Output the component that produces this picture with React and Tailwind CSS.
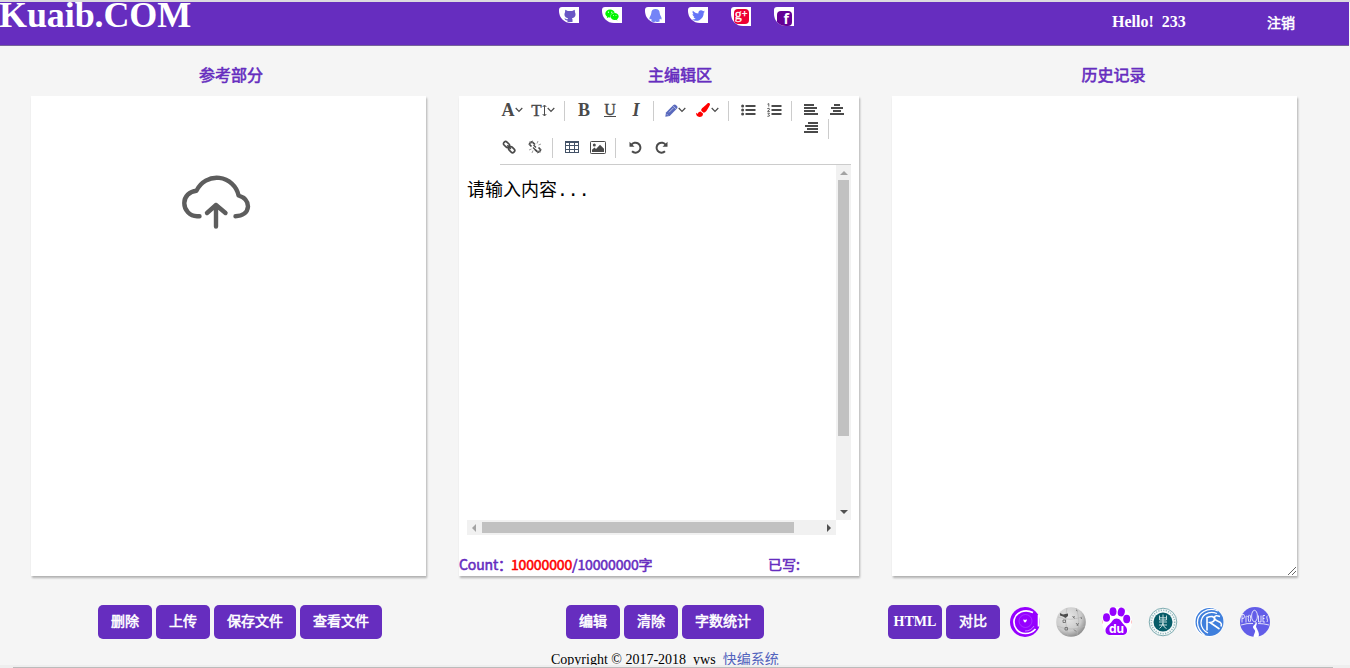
import React from "react";
import { FaWeixin, FaTwitter, FaPaintBrush } from "react-icons/fa";

const ink = "#4a4a4a";

function Btn({ children, wide, latin }) {
  return (
    <button className={`flex h-[34px] justify-center rounded-[5px] bg-[#662dbf] text-[14px] text-white ${latin ? "font-bold leading-[34px] font-['Liberation_Serif',serif]" : "leading-[30px] font-['Noto_Sans_CJK_SC',sans-serif] [-webkit-text-stroke:0.55px]"} ${wide ? "w-[82px]" : "w-[54px]"}`}>
      {children}
    </button>
  );
}

function Social({ children, tall }) {
  return (
    <span className={`flex w-5 items-center justify-center overflow-hidden rounded-tl-[3px] rounded-bl-[12px] bg-white ${tall ? "h-[19px]" : "h-4"}`}>
      {children}
    </span>
  );
}

function Title({ children, className }) {
  return <h2 className={`text-[16px] leading-6 text-[#662dbf] font-['Noto_Sans_CJK_SC',sans-serif] [-webkit-text-stroke:0.6px] ${className}`}>{children}</h2>;
}

function Chevron() {
  return (
    <svg width="8" height="6" viewBox="0 0 8 6" fill="none" stroke={ink} strokeWidth="1.2" className="shrink-0">
      <path d="M.7 1 4 4.4 7.3 1" />
    </svg>
  );
}

function Sep({ className }) {
  return <span className={`h-5 w-px shrink-0 bg-[#ccc] ${className}`} />;
}

function Lines({ rows }) {
  return (
    <svg width="14" height="11" viewBox="0 0 14 11" fill={ink} shapeRendering="crispEdges">
      {rows.map(([x, w], i) => (
        <rect key={i} x={x} y={i * 3} width={w} height="2" />
      ))}
    </svg>
  );
}

function BulletList() {
  return (
    <svg width="15" height="12" viewBox="0 0 15 12" fill={ink}>
      {[1, 5, 9].map((y) => (
        <g key={y}>
          <circle cx="1.6" cy={y + 1} r="1.5" />
          <path d={`M4.5 ${y}h10v2h-10z`} />
        </g>
      ))}
    </svg>
  );
}

function NumberList() {
  return (
    <svg width="15" height="14" viewBox="0 0 15 14" fill="none" stroke={ink}>
      <path d="M4.5 3h10M4.5 7h10M4.5 11h10" strokeWidth="2" />
      <path d="M.5 1.2 1.8.6v3M.3 5.6Q2.8 4.6 2.5 6.3L.6 8.4h2.2M.5 10.2h2L1.4 11.4Q3 12 2.3 13.1L.4 13.3" strokeWidth=".9" />
    </svg>
  );
}

function Pencil() {
  return (
    <svg width="13" height="13" viewBox="0 0 13 13">
      <path d="M.3 12.7 1 8.500 8.400 1Q9.700-.1 10.900 1L12.100 2.200Q13 3.400 12 4.600L4.700 12z" fill="#5969bd" />
      <path d="m4 8.300 4.500-4.500M8.300 2.200l2.700 2.700M1.800 10.200l1.200 1.200" stroke="#fff" strokeWidth=".55" />
    </svg>
  );
}

function Chain({ broken }) {
  return (
    <svg width="14" height="14" viewBox="0 0 14 14" fill="none" stroke={ink} strokeWidth="1.7">
      {broken ? (
        <>
          <path d="M7.500 3.500 9 2q1-.9 2 0l.7.7q.9 1 0 2L9.500 7M6.500 10.500 5 12q-1 .9-2 0l-.7-.7q-.9-1 0-2L4.500 7" transform="rotate(90 7 7)" />
          <path d="M5 7.500 9 11.500M5.500 5 8 7.500" strokeWidth="1.300" />
          <path d="M.5 4.500h2.500M4.500.5V3M1.500 1.500l2 2M11 9.500h2.500M9.500 11v2.500M10.500 10.500l2 2M10 1l-1 2.500M13 4l-2.500 1M1 10l2.500-1M4 13l1-2.500" stroke="#777" strokeWidth=".7" />
        </>
      ) : (
        <>
          <rect x="1.200" y="2.400" width="6.600" height="4.200" rx="1.900" transform="rotate(45 4.500 4.500)" />
          <rect x="6.400" y="7.600" width="6.600" height="4.200" rx="1.900" transform="rotate(45 9.700 9.700)" />
          <path d="m5.300 5.300 3.600 3.600" strokeWidth="1.600" />
        </>
      )}
    </svg>
  );
}

function Grid() {
  return (
    <svg width="14" height="12" viewBox="0 0 14 12" fill="none" stroke="#435267" shapeRendering="crispEdges">
      <path d="M.5.5h13v11H.5zM.5 1.5h13M.5 4.5h13M.5 8.5h13M4.500 1v10M9.500 1v10" />
    </svg>
  );
}

function Picture() {
  return (
    <svg width="16" height="13" viewBox="0 0 16 13">
      <rect x=".5" y=".5" width="15" height="12" rx=".8" fill="none" stroke={ink} />
      <circle cx="4.300" cy="3.900" r="1.500" fill={ink} />
      <path d="M2 11V8.800l2.500-2.400L6 7.900l4-4.100 4 4V11z" fill={ink} />
    </svg>
  );
}

function Turn({ flip }) {
  return (
    <svg width="13" height="13" viewBox="0 0 13 13" fill="none" className={flip ? "-scale-x-100" : ""}>
      <path d="M2.200 4A5 5 0 1 1 3 10.300" stroke={ink} strokeWidth="2" />
      <path d="M.5.8v5h5z" fill={ink} />
    </svg>
  );
}

function Cloud() {
  return (
    <svg width="70" height="54" viewBox="0 0 70 54" fill="none" stroke="#5d5d5d" strokeWidth="4.4" strokeLinecap="round" strokeLinejoin="round">
      <path d="M18.500 41.200H16A13 13 0 0 1 3.300 28C3.300 21.500 8.500 16.300 15.500 15.700A22.300 22.300 0 0 1 57.600 20.500C63 22.200 67 26 67 31.500C66.500 37.500 61.500 41.200 54.500 41.200" />
      <path d="M35 51.500V30M26 38l9-8 9.500 8" />
    </svg>
  );
}

function Arrow({ dir, faint }) {
  const d = { up: "M0 4h8L4 0z", down: "M0 0h8L4 4z", left: "M4 0v8L0 4z", right: "M0 0v8l4-4z" }[dir];
  return (
    <svg width={dir === "up" || dir === "down" ? 8 : 4} height={dir === "up" || dir === "down" ? 4 : 8} fill={faint ? "#a3a3a3" : "#505050"}>
      <path d={d} />
    </svg>
  );
}

function SpiralLogo() {
  return (
    <svg width="30" height="30" viewBox="0 0 30 30" fill="none">
      <circle cx="15" cy="15" r="15" fill="#9600ff" />
      <path d="M23 5.500C15 1.500 6 5 4.200 12.500 2.800 20 8 26.500 15.500 26.500q6 0 10-4.500" stroke="#fff" strokeWidth="1.700" />
      <path d="M28.700 8v11.500" stroke="#fff" strokeWidth="2" />
      <circle cx="15.500" cy="14" r="6.500" stroke="#b461ff" strokeWidth=".5" />
      <path d="M24 19q-3 5-9 5" stroke="#d9b0ff" strokeWidth=".7" />
      <path d="m13.500 12.300 1.500.7 1.700-.7v1.700L15 15.800 13.500 14z" fill="#fff" />
    </svg>
  );
}

function GlobeLogo() {
  return (
    <svg width="30" height="30" viewBox="0 0 30 30">
      <defs>
        <radialGradient id="globe" cx=".4" cy=".35" r=".7">
          <stop offset="0" stopColor="#e8e8e8" />
          <stop offset=".65" stopColor="#cacaca" />
          <stop offset="1" stopColor="#858585" />
        </radialGradient>
      </defs>
      <circle cx="15" cy="15" r="14.800" fill="url(#globe)" />
      <path d="M11 1Q8 13 12 29M20 1Q25 13 21 28M2 10q13 5 26-1M1 19q14 6 28 0" fill="none" stroke="#b4b4b4" strokeWidth=".6" />
      <path d="m4 6 3 1.500 5-1v2.500L9.500 11 7 9.500 4 8.500z" fill="#4d4d4d" />
      <path d="M7 13h2.500v2.500H7zM16.500 9l2 2.500M18.500 9l-1 2M20 16l2 2.500M22.500 16l-1.500 3M9 20.500h2.500V23H9zM18 22.500l2 2M20 3l1.500 1M25 10l.5 2" fill="none" stroke="#666" strokeWidth=".8" />
    </svg>
  );
}

function PawLogo() {
  return (
    <svg width="30" height="30" viewBox="0 0 30 30">
      <circle cx="15" cy="15" r="15" fill="#fff" />
      <g fill="#9600ff">
        <ellipse cx="4.500" cy="10.500" rx="3.500" ry="4.300" />
        <ellipse cx="11" cy="4.600" rx="3.500" ry="4.400" />
        <ellipse cx="19.300" cy="5" rx="3.500" ry="4.400" transform="rotate(12 19.300 5)" />
        <ellipse cx="24.700" cy="12" rx="3.500" ry="4.200" />
        <path d="M14.500 11.500c3.500 0 4.500 3 7 5.700 3 3 3.800 4.300 3.500 7-.5 3.500-3.500 4.300-10.500 3.700C7.500 28.500 4 28 3.500 24c-.3-3 1.500-4.500 4-6.800 2.500-2.200 3.500-5.700 7-5.700z" />
      </g>
      <path d="M.3 13.500v3M29.700 13.500v3" stroke="#ff8585" strokeWidth=".6" />
      <text x="14.500" y="25.500" textAnchor="middle" fill="#fff" fontSize="12" fontWeight="bold" fontFamily="Inter, sans-serif">du</text>
    </svg>
  );
}

function SealLogo() {
  return (
    <svg width="30" height="30" viewBox="0 0 30 30" fill="none">
      <circle cx="15" cy="15" r="13.800" fill="#f5f9f9" stroke="#80adb2" />
      <circle cx="15" cy="15" r="11.700" stroke="#94b8bd" strokeWidth="1.500" strokeDasharray="1.200 1.300" />
      <circle cx="15" cy="15" r="9.500" fill="#075c68" />
      <path d="M11.500 8.500v4.500h7V8.500M15 7.500v10M11.500 10.800h7M11 15h8M11 18h8M15 16q-1 4-3.500 5.500M15 17q1 4 3.500 4.500" stroke="#d5e8e8" strokeWidth=".9" />
    </svg>
  );
}

function WaveLogo() {
  return (
    <svg width="30" height="30" viewBox="0 0 30 30" fill="none">
      <circle cx="15" cy="15" r="15" fill="#fff" />
      <circle cx="15.500" cy="15" r="14" fill="#3f7fdc" />
      <path d="M24 4C14-.5 3 6 3.500 16c.3 5 3 9 7 12M23 6.500C14 3 7 8.500 7 16c.3 5 3 8 7 10" stroke="#fff" strokeWidth="1.300" />
      <path d="M13 23.500V10.500q7-2.500 7.500 1.500 0 3-4.500 3.500l9.500 6.500M26 9.500q-5-2-5.500 1 0 2.500 4 4t2.500 5" stroke="#fff" strokeWidth="1.600" />
    </svg>
  );
}

function QuestLogo() {
  return (
    <svg width="30" height="30" viewBox="0 0 30 30" fill="none">
      <circle cx="15" cy="15" r="15" fill="#625de8" />
      <g stroke="#fff" strokeWidth=".8">
        <path d="M2 15.500V7.500q2.500-1 2.500 1.800T2 11.500M6 15.500V9.500q0-1 1.800 0" />
        <ellipse cx="9.500" cy="11.500" rx="1.200" ry="3.600" />
        <ellipse cx="14.500" cy="9" rx="2.900" ry="5.700" />
        <path d="M18.500 8.500v6.500H21V8.500M25 8.500h-2V15h2M23 11.500h1.500M28 8.500q-2 1-1 3t0 3.500M1 18q6-2 12-1.500M18 16.500q6 0 11 1.500" />
      </g>
      <path d="M15 14c2 3-2 4-2 6 0 2 3 3 2 5-.5 2-1.500 3-1.500 5h5c1-3 0-5-1-7-1-3-2-3-1-5 1-2 0-3-1.500-4z" fill="#fff" />
    </svg>
  );
}

function Slot({ className, children }) {
  return <span className={`flex h-5 shrink-0 items-center justify-center ${className}`}>{children}</span>;
}

export default function App() {
  return (
    <div className="flex h-[668px] w-[1350px] flex-col overflow-hidden border-t-2 border-[#dcdadf] bg-[#f5f5f5] font-['Liberation_Serif','Noto_Sans_CJK_SC',serif]">
      <header className="flex h-11 w-[1349px] shrink-0 border-b border-[#76649a] bg-[#662dbf] text-white">
        <h1 className="w-[559px] -indent-px text-[36px] font-bold leading-[26px] tracking-[-0.1px]">Kuaib.COM</h1>
        <div className="flex w-[553px] items-start gap-[23px] pt-[5px]">
          <Social>
            <svg width="12" height="13" viewBox="0 0 12 13" fill="#6956c5" className="ml-px">
              <path d="M1.300.8 3.800 2h4.400L10.700.8 11 3.300Q12 5 11.300 7 10.500 9 8 9.300L8.500 10.500V13h-5v-1.500Q1.500 11.800.3 9.500q1.700-.2 2.200.8h1L4 9.300Q1.500 9 .7 7 0 5 1 3.300z" />
            </svg>
          </Social>
          <Social><FaWeixin size={14} color="#00f500" /></Social>
          <Social>
            <svg width="13" height="13" viewBox="0 0 13 13" fill="#7584f7">
              <path d="M6.500 0Q10.500.2 10.700 4 10.800 5.500 11.700 7q1.300 2 .7 3.500-.7.200-1.300-.8-.4 1-1 1.400 1.200.8.400 1.500-2 .7-4-.2-2 .9-4 .2-.8-.7.4-1.500-.6-.4-1-1.400-.6 1-1.300.8Q0 9 1.300 7 2.200 5.500 2.300 4 2.500.2 6.500 0z" />
            </svg>
          </Social>
          <Social><FaTwitter size={13} color="#6575f7" /></Social>
          <Social tall>
            <span className="flex h-[15px] w-[15px] justify-center rounded-sm bg-[#ed0033] text-[14px] leading-[11px] [-webkit-text-stroke:0.3px]">
              g<span className="text-[10px] font-bold leading-[9px]">+</span>
            </span>
          </Social>
          <Social tall>
            <span className="mt-[3px] ml-[1px] flex h-[15px] w-[15px] justify-end rounded-sm bg-[#640095] pr-[3px] font-['Open_Sans',sans-serif] text-[14px] font-bold leading-[15px]">f</span>
          </Social>
        </div>
        <span className="w-[155px] pt-[10px] text-[16px] font-bold leading-5 whitespace-pre">Hello!  233</span>
        <span className="pt-[10px] text-[14px] leading-5 font-['Noto_Sans_CJK_SC',sans-serif] [-webkit-text-stroke:0.55px]">注销</span>
      </header>

      <div className="flex h-[50px] shrink-0 items-start pt-[16px] text-center">
        <Title className="ml-[31px] w-[400px]">参考部分</Title>
        <Title className="ml-[49px] w-[400px]">主编辑区</Title>
        <Title className="ml-[33px] w-[401px]">历史记录</Title>
      </div>

      <main className="flex h-[480px] shrink-0 pl-[31px]">
        <section className="flex w-[395px] justify-center bg-white pt-[79px] pr-[25px] shadow-[1px_2px_2px_rgba(0,0,0,0.28)]">
          <Cloud />
        </section>

        <section className="ml-[33px] flex w-[400px] flex-col bg-white shadow-[1px_2px_2px_rgba(0,0,0,0.28)]">
          <div className="ml-[41px] flex h-[69px] w-[351px] flex-col border-b border-[#ccc] pt-[5px]">
            <div className="flex h-[37px] text-[#4a4a4a]">
              <Slot className="w-6 pb-[2px] text-[18px] font-bold leading-none">A<Chevron /></Slot>
              <Slot className="ml-[7px] w-6 pb-[2px] text-[17px] leading-none [-webkit-text-stroke:0.4px]">
                T
                <svg width="5" height="13" viewBox="0 0 5 13" fill="none" stroke={ink} className="shrink-0">
                  <path d="M2.500 1.500v10M.7 3l1.800-2 1.800 2M.7 10l1.800 2 1.800-2" />
                </svg>
                <Chevron />
              </Slot>
              <Sep className="ml-[9px]" />
              <Slot className="ml-[9px] w-5 pb-[2px] text-[18px] font-bold">B</Slot>
              <Slot className="ml-[6px] w-5 pb-[2px]"><span className="border-b border-[#4a4a4a] text-[16px] leading-[13px] [-webkit-text-stroke:0.4px]">U</span></Slot>
              <Slot className="ml-[6px] w-5 pb-[2px] text-[18px] font-bold italic">I</Slot>
              <Sep className="ml-[7px]" />
              <Slot className="ml-[10px] w-[22px] pb-[2px]"><Pencil /><Chevron /></Slot>
              <Slot className="ml-[9px] w-6 gap-px pb-[2px]"><FaPaintBrush size={14} color="#f00" /><Chevron /></Slot>
              <Sep className="ml-[9px]" />
              <Slot className="ml-[12px] w-[15px] pb-[2px]"><BulletList /></Slot>
              <Slot className="ml-[11px] w-[15px] pb-[2px]"><NumberList /></Slot>
              <Sep className="ml-[9px]" />
              <div className="ml-3 flex w-11 shrink-0 flex-wrap">
                <Slot className="w-[14px] pb-[3px]"><Lines rows={[[0, 10], [0, 13], [0, 11], [0, 14]]} /></Slot>
                <Slot className="ml-3 w-[14px] pb-[3px]"><Lines rows={[[4, 6], [1, 12], [3, 8], [0, 14]]} /></Slot>
                <Slot className="-mt-1 w-[14px]"><Lines rows={[[4, 10], [1, 13], [3, 11], [0, 14]]} /></Slot>
                <Sep className="-mt-[2px] ml-[10px]" />
              </div>
            </div>
            <div className="flex h-5 text-[#4a4a4a]">
              <Slot className="ml-[2px] w-[14px] pb-[2px]"><Chain /></Slot>
              <Slot className="ml-3 w-[14px] pb-[2px]"><Chain broken /></Slot>
              <Sep className="ml-[10px]" />
              <Slot className="ml-3 w-[14px] pb-[2px]"><Grid /></Slot>
              <Slot className="ml-[11px] w-4 pb-px"><Picture /></Slot>
              <Sep className="ml-[9px]" />
              <Slot className="ml-3 w-[14px] pb-px"><Turn /></Slot>
              <Slot className="ml-3 w-[14px] pb-px"><Turn flip /></Slot>
            </div>
          </div>

          <div className="ml-2 flex h-[355px] w-[384px]">
            <p className="w-[369px] pt-[11px] text-[18px] leading-7 text-black font-['DejaVu_Sans_Mono','Noto_Sans_CJK_SC',monospace]">请输入内容...</p>
            <div className="flex w-[15px] flex-col items-center bg-[#f1f1f1]">
              <span className="flex h-[15px] items-center"><Arrow dir="up" faint /></span>
              <span className="h-64 w-[11px] bg-[#c1c1c1]" />
              <span className="mt-auto flex h-4 items-center"><Arrow dir="down" /></span>
            </div>
          </div>
          <div className="ml-2 flex h-[15px] w-[369px] items-center bg-[#f1f1f1]">
            <span className="flex w-[15px] justify-center pr-px"><Arrow dir="left" faint /></span>
            <span className="h-[11px] w-[312px] bg-[#c1c1c1]" />
            <span className="ml-auto flex w-[15px] justify-center"><Arrow dir="right" /></span>
          </div>
          <div className="mt-[19px] flex text-[14px] leading-5 text-[#662dbf] font-['Noto_Sans_CJK_SC',sans-serif] [-webkit-text-stroke:0.55px]">
            <span className="w-[309px] tracking-[-0.13px]">Count：<span className="-ml-px text-[#f00]">10000000</span>/10000000字</span>
            <span>已写:</span>
          </div>
        </section>

        <section className="ml-[33px] flex w-[405px] items-end justify-end bg-white shadow-[1px_2px_2px_rgba(0,0,0,0.28)]">
          <svg width="10" height="10" viewBox="0 0 10 10" stroke="#555" strokeWidth=".9"><path d="m1 9 8-8M5 9l4-4" /></svg>
        </section>
      </main>

      <div className="mt-[29px] flex h-[34px] shrink-0 items-center">
        <div className="ml-[98px] flex w-[468px] gap-1">
          <Btn>删除</Btn><Btn>上传</Btn><Btn wide>保存文件</Btn><Btn wide>查看文件</Btn>
        </div>
        <div className="flex w-[322px] gap-1">
          <Btn>编辑</Btn><Btn>清除</Btn><Btn wide>字数统计</Btn>
        </div>
        <div className="flex gap-1"><Btn latin>HTML</Btn><Btn>对比</Btn></div>
        <div className="ml-[10px] flex gap-4">
          <SpiralLogo /><GlobeLogo /><PawLogo /><SealLogo /><WaveLogo /><QuestLogo />
        </div>
      </div>

      <footer className="mt-[10px] h-4 shrink-0 overflow-hidden pl-[551px] text-[14px] leading-[22px] whitespace-pre text-black">
        Copyright © 2017-2018  yws  <a className="text-[#5263bd]">快编系统</a>
      </footer>
      <div className="h-[3px] w-full shrink-0 bg-[#eee] pt-[2px]"><div className="ml-[13px] h-px w-[1320px] bg-[#bbb]" /></div>
    </div>
  );
}
